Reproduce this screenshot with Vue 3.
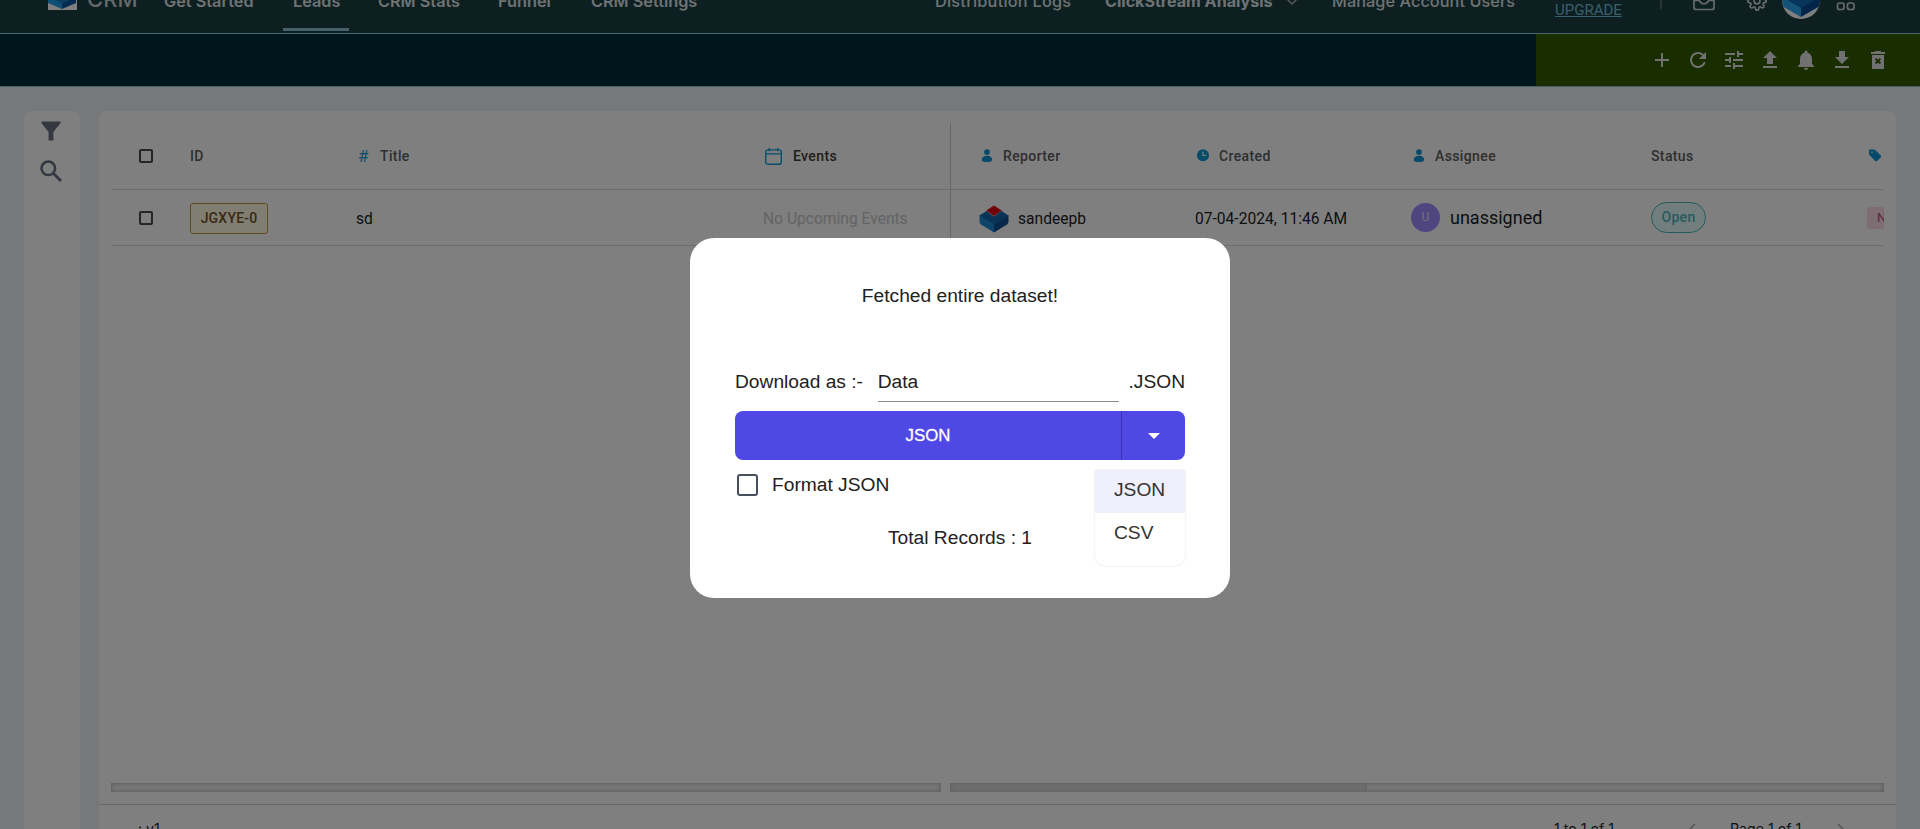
<script setup>
const left = [
  { t: 'Get Started', c: 'n1' },
  { t: 'Leads', c: 'n2' },
  { t: 'CRM Stats', c: 'n3' },
  { t: 'Funnel', c: 'n4' },
  { t: 'CRM Settings', c: 'n5' },
]
const actions = [
  'M19 13h-6v6h-2v-6H5v-2h6V5h2v6h6z',
  'M17.65 6.35A7.96 7.96 0 0 0 12 4a8 8 0 1 0 7.73 10h-2.08A6 6 0 1 1 12 6c1.66 0 3.14.69 4.22 1.78L13 11h7V4z',
  'M3 17v2h6v-2zM3 5v2h10V5zm10 16v-2h8v-2h-8v-2h-2v6zM7 9v2H3v2h4v2h2V9zm14 4v-2H11v2zm-6-4h2V7h4V5h-4V3h-2z',
  'M9 16h6v-6h4l-7-7-7 7h4zm-4 2h14v2H5z',
  'M12 22c1.1 0 2-.9 2-2h-4a2 2 0 0 0 2 2zm6-6v-5c0-3.07-1.64-5.64-4.5-6.32V4a1.5 1.5 0 0 0-3 0v.68C7.63 5.36 6 7.92 6 11v5l-2 2v1h16v-1z',
  'M19 9h-4V3H9v6H5l7 7zM5 18v2h14v-2z',
  'M6 21h12V7H6zM8.9 11.4 10.3 10l1.7 1.7 1.7-1.7 1.4 1.4-1.7 1.7 1.7 1.7-1.4 1.4-1.7-1.7-1.7 1.7-1.4-1.4 1.7-1.7zM15.5 4l-1-1h-5l-1 1H5v2h14V4z',
]
const person = 'M8 1.2a2.9 2.9 0 1 1 0 5.8 2.9 2.9 0 0 1 0-5.8zM8 7.8c3.2 0 5.2 1.7 5.2 3.9 0 1.7-1.5 2.3-5.2 2.3s-5.2-.6-5.2-2.3c0-2.2 2-3.9 5.2-3.9z'
</script>

<template>
  <div class="screen">
    <header class="top">
      <svg class="logo" viewBox="0 0 29 29"><rect width="29" height="29" fill="#fff" /><path d="M0 15l14 7v6L0 22z" fill="#1f9fe8" /><path d="M14 22l14-7v7l-14 6z" fill="#0a56a0" /><path d="M0 15l14-7 14 7-14 8z" fill="#137bc4" /></svg>
      <span class="brand">CRM</span>
      <a v-for="n in left" :key="n.t" class="nav" :class="n.c">{{ n.t }}</a>
      <a class="nav n6">Distribution Logs</a>
      <a class="nav n7">ClickStream Analysis</a>
      <svg class="chev" viewBox="0 0 12 12"><path d="M1 4l5 5 5-5" fill="none" stroke="#aab" stroke-width="1.5" /></svg>
      <a class="nav n8">Manage Account Users</a>
      <a class="upgrade">UPGRADE</a>
      <i class="sep"></i>
      <svg class="inbox" viewBox="0 0 24 20" fill="none" stroke="#cfd6d8" stroke-width="1.7"><path d="M2 9l4-7h12l4 7v7.5a2 2 0 0 1-2 2H4a2 2 0 0 1-2-2z" /><path d="M2 9.5h5c1 0 1.3 3.5 5 3.5s4-3.5 5-3.5h5" /></svg>
      <svg class="gear" viewBox="0 0 24 24" fill="none" stroke="#cfd6d8" stroke-width="2"><circle cx="12" cy="12" r="3.5" /><path d="M19.4 15a1.65 1.65 0 0 0 .33 1.82l.06.06a2 2 0 1 1-2.83 2.83l-.06-.06a1.65 1.65 0 0 0-2.8 1.17V21a2 2 0 1 1-4 0v-.09a1.65 1.65 0 0 0-2.9-1.18l-.06.06a2 2 0 1 1-2.83-2.83l.06-.06a1.65 1.65 0 0 0-1.17-2.8H3a2 2 0 1 1 0-4h.09a1.65 1.65 0 0 0 1.18-2.9l-.06-.06a2 2 0 1 1 2.83-2.83l.06.06A1.65 1.65 0 0 0 10 3.09V3a2 2 0 1 1 4 0v.09a1.65 1.65 0 0 0 2.8 1.18l.06-.06a2 2 0 1 1 2.83 2.83l-.06.06A1.65 1.65 0 0 0 20.91 10H21a2 2 0 1 1 0 4h-.09a1.65 1.65 0 0 0-1.51 1z" /></svg>
      <svg class="avatar" viewBox="0 0 38 38"><clipPath id="av"><circle cx="19" cy="19" r="19" /></clipPath><g clip-path="url(#av)"><rect width="38" height="38" fill="#fff" /><path d="M0 16l19 10v10L0 25z" fill="#2ba6f0" /><path d="M19 26l19-10v9L19 36z" fill="#074b95" /><path d="M0 16L19 6l19 10-19 11z" fill="#0d68b4" /></g></svg>
      <svg class="apps" viewBox="0 0 20 20" fill="none" stroke="#cfd6d8" stroke-width="1.7"><rect x="1.5" y="1.5" width="6.5" height="6.5" rx="2" /><rect x="11.5" y="1.5" width="6.5" height="6.5" rx="2" /><rect x="1.5" y="12" width="6.5" height="6.5" rx="2" /><rect x="11.5" y="12" width="6.5" height="6.5" rx="2" /></svg>
    </header>

    <div class="bar">
      <div class="actions">
        <svg v-for="(d, i) in actions" :key="i" viewBox="0 0 24 24"><path :d="d" fill="#e3e3e3" fill-rule="evenodd" /></svg>
      </div>
    </div>

    <main class="body">
      <aside class="side">
        <svg viewBox="0 0 24 24"><path d="M2.5 2.500h19v1.700L14.400 13v8.500H9.600V13L2.500 4.200z" fill="#6a7180" /></svg>
        <svg viewBox="0 0 24 24"><circle cx="9.300" cy="9.300" r="6.800" fill="none" stroke="#6a7180" stroke-width="2.500" /><path d="M14 14l8 8" stroke="#6a7180" stroke-width="3" /></svg>
      </aside>
      <section class="card">
        <div class="table">
          <div class="row head">
            <i class="box"></i>
            <b class="c-id">ID</b>
            <b class="c-title"><span class="hash">#</span>Title</b>
            <b class="c-ev"><svg class="cal" viewBox="0 0 16 16" fill="none" stroke="#129bd6" stroke-width="1.300"><rect x=".7" y="1.800" width="14.600" height="13.500" rx="2" /><path d="M.6 5.500h14.800M4 0v3M12 0v3" /></svg><span class="dark">Events</span></b>
            <div class="scroll">
              <b class="c1"><svg class="ic" viewBox="0 0 16 16"><path :d="person" fill="#0e96d6" /></svg>Reporter</b>
              <b class="c2"><svg class="ic" viewBox="0 0 16 16"><circle cx="8" cy="7.300" r="6" fill="#0e96d6" /><path d="M8 3.500v4h3.500" fill="none" stroke="#fff" stroke-width="1.200" /></svg>Created</b>
              <b class="c3"><svg class="ic" viewBox="0 0 16 16"><path :d="person" fill="#0e96d6" /></svg>Assignee</b>
              <b class="c4">Status</b>
              <b class="c5"><svg class="ic" viewBox="0 0 16 16"><path d="M2.500 1.500H7c.7 0 1 .2 1.500.7l5 4.800c.9.9.9 1.600.2 2.400l-3.300 3.400c-.8.8-1.600.8-2.400 0l-5.200-5.200C2.200 7 2 6.600 2 6V2c0-.3.2-.5.500-.5z" fill="#0e96d6" /><circle cx="5" cy="4.300" r=".9" fill="#bde" /></svg></b>
            </div>
          </div>
          <div class="row data">
            <i class="box"></i>
            <span class="c-id"><em class="tag">JGXYE-0</em></span>
            <span class="c-title">sd</span>
            <span class="c-ev none">No Upcoming Events</span>
            <div class="scroll">
              <span class="c1"><svg class="cube" viewBox="0 0 30 28"><path d="M.5 10l14.500 9v8.500L2 19.500C1 18.500.5 18 .5 16z" fill="#1e8ad6" /><path d="M29.500 10L15 19v8.500l13-8c1-1 1.500-1.500 1.500-3.500z" fill="#0e4f96" /><path d="M.5 10.500L7.500 6l7.500 5.500L22.500 6l7 4.500L15 19.500z" fill="#1568ae" /><path d="M15 .5l7.800 5L15 11 7.200 5.500z" fill="#e00012" /></svg>sandeepb</span>
              <span class="c2">07-04-2024, 11:46 AM</span>
              <span class="c3"><em class="u">U</em>unassigned</span>
              <span class="c4"><em class="open">Open</em></span>
              <span class="c5"><em class="pink">N</em></span>
            </div>
          </div>
        </div>
        <div class="tracks"><i></i><i class="r"><s></s></i></div>
        <footer class="foot"><span class="f1">: v1</span><span class="f2">1 to 1 of 1</span>
          <svg viewBox="0 0 8 12"><path d="M7 1L2 6l5 5" fill="none" stroke="#aaa" stroke-width="1.5" /></svg>
          <span class="f3">Page 1 of 1</span>
          <svg viewBox="0 0 8 12"><path d="M1 1l5 5-5 5" fill="none" stroke="#aaa" stroke-width="1.5" /></svg>
        </footer>
      </section>
    </main>

    <div class="overlay">
      <div class="modal">
        <p class="title">Fetched entire dataset!</p>
        <div class="name"><span>Download as :-</span><span class="input">Data</span><span>.JSON</span></div>
        <div class="split"><span>JSON</span><i><svg viewBox="0 0 12 6"><path d="M0 0h12L6 6z" fill="#fff" /></svg></i></div>
        <div class="fmt"><i></i><span>Format JSON</span></div>
        <p class="total">Total Records : 1</p>
        <ul class="menu"><li class="on">JSON</li><li>CSV</li></ul>
      </div>
    </div>
  </div>
</template>

<style>
body { margin: 0; overflow: hidden; }
</style>
<style scoped>
* { box-sizing: border-box; }
.screen { position: relative; width: 1920px; height: 829px; overflow: hidden; background: #eff1f5; font-family: Roboto, "Liberation Sans", sans-serif; color: #181d25; display: flex; flex-direction: column; }
svg { display: block; flex: none; }
em, i { font-style: normal; }
.top { flex: none; height: 34px; overflow: hidden; background: #1a3e42; border-bottom: 1px solid #8ecfe4; display: flex; align-items: flex-end; }
.top > * { flex: none; }
.logo { width: 29px; height: 29px; margin: 0 0 23px 48px; }
.brand { width: 60px; margin: 0 0 23px 10px; font: 500 22px/22px Inter, sans-serif; color: #c9d2d4; }
.nav { position: relative; height: 42px; font: 600 16.3px/20px Inter, sans-serif; color: #dfe5e6; white-space: nowrap; }
.n1 { width: 90px; margin-left: 17px; }
.n2 { width: 66px; margin-left: 29px; padding-left: 10px; }
.n2::after { content: ""; position: absolute; left: 0; bottom: 2px; width: 66px; height: 3px; background: #8ec3da; }
.n3 { width: 84px; margin-left: 29px; }
.n4 { width: 56px; margin-left: 36px; }
.n5 { width: 110px; margin-left: 37px; }
.n6 { width: 132px; margin-left: 234px; font-weight: 500; letter-spacing: .25px; }
.n7 { width: 168px; margin-left: 38px; font-weight: 700; font-size: 16.1px; }
.chev { width: 12px; height: 12px; margin: 0 0 26px 13px; }
.n8 { width: 184px; margin-left: 34px; font-weight: 500; letter-spacing: .05px; }
.upgrade { width: 68px; margin: 0 0 14px 39px; font-size: 15px; line-height: 18px; color: #72bedb; text-decoration: underline; }
.sep { width: 2px; height: 20px; margin: 0 0 24px 37px; background: #4a686c; }
.inbox { width: 24px; height: 20px; margin: 0 0 22px 30px; }
.gear { width: 20px; height: 20px; margin: 0 0 22px 31px; }
.avatar { width: 38px; height: 38px; margin: 0 0 14px 15px; }
.apps { width: 20px; height: 20px; margin: 0 0 22px 16px; }
.bar { flex: none; height: 53px; background: #002c3a; border-bottom: 1px solid #8fc0d0; display: flex; justify-content: flex-end; }
.actions { width: 384px; background: #305c00; display: flex; align-items: center; justify-content: flex-end; gap: 12px; padding-right: 30px; }
.actions svg { width: 24px; height: 24px; }
.body { flex: 1; display: flex; gap: 19px; padding: 24px 24px 0; min-height: 0; }
.side { width: 56px; background: #fff; border-radius: 7px 7px 0 0; padding: 8px 0 0 15px; }
.side svg { width: 24px; height: 24px; margin-bottom: 16px; }
.card { width: 1797px; background: #fff; border-radius: 7px 7px 0 0; padding: 12px 12px 0; display: flex; flex-direction: column; overflow: hidden; }
.table { height: 660px; flex: none; }
.row { display: flex; align-items: center; border-bottom: 1px solid #d8dadd; }
.row > *, .scroll > * { flex: none; display: flex; align-items: center; white-space: nowrap; }
.head { height: 67px; font-size: 14px; }
.head b { font-weight: 500; color: #5c5e61; letter-spacing: .38px; }
.data { height: 56px; font-size: 15.6px; padding-top: 2px; }
.box { width: 14px; height: 14px; border: 2px solid #484b52; border-radius: 2px; margin: 0 37px 0 28px; }
.data .box { margin-top: -2px; }
.c-id { width: 166px; }
.c-title { width: 407px; }
.c-ev { width: 187px; }
.none { color: #c6c8ca; }
.hash { color: #129bd6; font-size: 17px; width: 24px; padding-left: 2px; font-weight: 400; }
.cal { width: 17px; height: 17px; margin: 0 11px 0 2px; }
.dark { color: #3a3c3f; }
.scroll { width: 934px; align-self: stretch; border-left: 1px solid #cdcfd2; overflow: hidden; }
.row .scroll { align-items: center; }
.data .scroll { margin-top: -2px; padding-top: 2px; }
.ic { width: 16px; height: 16px; margin-right: 8px; }
.c1, .c2, .c4 { width: 216px; padding-left: 28px; }
.c3 { width: 240px; padding-left: 28px; }
.c5 { padding-left: 28px; }
.cube { width: 30px; height: 28px; margin-right: 9px; }
.tag { height: 31px; width: 78px; text-align: center; border: 1px solid #c09a3c; border-radius: 3px; background: #fffce2; font-size: 14px; font-weight: 500; line-height: 29px; color: #74522a; letter-spacing: .2px; }
.u { width: 29px; height: 29px; margin-right: 10px; border-radius: 50%; background: #a18cff; color: #e4e0f4; font-size: 12px; line-height: 29px; text-align: center; }
.data .c3 { font-size: 18px; padding-bottom: 3px; }
.open { height: 31px; width: 55px; text-align: center; border: 1px solid #48b8b8; border-radius: 16px; background: #e4fbfb; color: #4cb6bd; font-size: 14px; font-weight: 500; line-height: 29px; letter-spacing: .3px; margin-top: -3px; }
.pink { width: 30px; height: 22px; background: #ffdbe9; color: #b8407c; border-radius: 3px; font-size: 13px; line-height: 22px; padding-left: 10px; margin-top: -1px; }
.tracks { flex: none; display: flex; gap: 9px; height: 9px; }
.tracks i { width: 830px; background: #f0f0f0; box-shadow: inset 0 0 5px #aaa; }
.tracks .r { width: 934px; }
.tracks s { display: block; width: 417px; height: 9px; background: #dcdcdc; box-shadow: inset 0 0 4px #bbb; border-radius: 0 3px 3px 0; }
.foot { flex: none; height: 60px; margin: 12px -12px 0; border-top: 1px solid #d0d2d5; display: flex; padding-top: 14px; font: 14.2px/20px Inter, sans-serif; color: #22262c; }
.foot span { white-space: nowrap; flex: none; }
.foot svg { width: 8px; height: 12px; margin-top: 4px; }
.f1 { width: 1455px; padding-left: 39px; }
.f2 { width: 134px; }
.f3 { width: 107px; margin-left: 34px; }
.overlay { position: absolute; inset: 0; background: rgba(0, 0, 0, .5); display: flex; justify-content: center; padding-top: 238px; }
.modal { position: relative; width: 540px; height: 360px; background: #fff; border-radius: 24px; padding: 46px 45px 0; font: 19.2px/24px "Liberation Sans", Arial, sans-serif; color: #212121; }
.modal p { margin: 0; text-align: center; }
.name { display: flex; align-items: flex-start; margin-top: 62px; height: 41px; justify-content: space-between; }
.input { width: 241px; height: 32px; border-bottom: 1px solid #8b8b8b; margin-left: 5px; }
.split { height: 49px; border-radius: 8px; background: #4f48e5; color: #fff; display: flex; font-size: 16.8px; font-weight: 400; overflow: hidden; }
.split span { width: 386px; line-height: 49px; text-align: center; -webkit-text-stroke: .3px #fff; }
.split i { flex: 1; border-left: 1px solid #3932b6; display: flex; align-items: center; justify-content: center; }
.split svg { width: 12px; height: 6px; }
.fmt { display: flex; align-items: flex-start; padding-top: 13px; height: 66px; }
.fmt i { width: 21px; height: 22px; border: 2px solid #48505e; border-radius: 3px; margin: 1px 14px 0 2px; }
.menu { position: absolute; right: 45px; top: 232px; width: 90px; height: 96px; margin: 0; padding: 0; list-style: none; background: #fff; border-radius: 0 0 10px 10px; box-shadow: 0 0 2px rgba(0, 0, 0, .16); }
.menu li { height: 43px; line-height: 40px; padding-left: 19px; color: #333; }
.menu .on { background: #f0f0fd; }
</style>
